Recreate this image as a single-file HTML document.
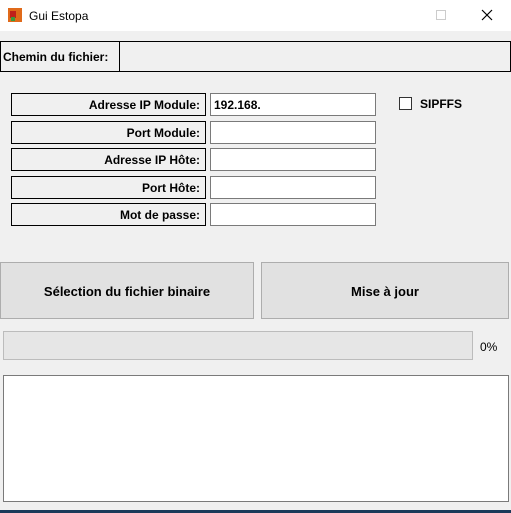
<!DOCTYPE html><html><head><style>
body{margin:0;width:511px;height:513px;background:#f0f0f0;position:relative;overflow:hidden;font-family:"Liberation Sans",sans-serif;font-size:12px;}
div{position:absolute;box-sizing:border-box;}
.lbl{left:11px;width:195px;height:23px;border:1px solid #000;text-align:right;font-weight:bold;padding-right:5px;line-height:23px;font-size:12px}
.in{left:210px;width:166px;height:23px;border:1px solid #7a7a7a;background:#fff;font-weight:bold;padding-left:3px;line-height:23px;font-size:12px}
.btn{top:262px;height:57px;background:#e1e1e1;border:1px solid #adadad;text-align:center;line-height:58px;font-weight:bold;font-size:13px}
</style></head><body>
<div style="left:0;top:0;width:511px;height:31px;background:#fff"></div>
<div style="left:8px;top:8px;width:14px;height:14px;background:#e06a1a"></div>
<div style="left:10px;top:11px;width:6px;height:7px;background:#c0201a"></div>
<div style="left:11px;top:17px;width:4px;height:4px;background:#3a9a3a"></div>
<div style="left:29px;top:9px;font-size:12px">Gui Estopa</div>
<div style="left:436px;top:10px;width:10px;height:10px;border:1px solid #ccc"></div>
<svg style="position:absolute;left:481px;top:9px" width="12" height="12"><path d="M1 1L11 11M11 1L1 11" stroke="#000" stroke-width="1.2"/></svg>
<div style="left:0;top:41px;width:511px;height:31px;border:1px solid #000"></div>
<div style="left:119px;top:41px;width:1px;height:31px;background:#000"></div>
<div style="left:3px;top:50px;font-weight:bold;font-size:12px;line-height:14px;top:50px">Chemin du fichier:</div>
<div class="lbl" style="top:93px">Adresse IP Module:</div>
<div class="lbl" style="top:121px">Port Module:</div>
<div class="lbl" style="top:148px">Adresse IP Hôte:</div>
<div class="lbl" style="top:176px">Port Hôte:</div>
<div class="lbl" style="top:203px">Mot de passe:</div>
<div class="in" style="top:93px">192.168.</div>
<div class="in" style="top:121px"></div>
<div class="in" style="top:148px"></div>
<div class="in" style="top:176px"></div>
<div class="in" style="top:203px"></div>
<div style="left:399px;top:97px;width:13px;height:13px;border:1px solid #333;background:#fff"></div>
<div style="left:420px;top:97px;font-weight:bold;font-size:12px">SIPFFS</div>
<div class="btn" style="left:0;width:254px">Sélection du fichier binaire</div>
<div class="btn" style="left:261px;width:248px">Mise à jour</div>
<div style="left:3px;top:331px;width:470px;height:29px;background:#e6e6e6;border:1px solid #bcbcbc"></div>
<div style="left:480px;top:340px;font-size:12px">0%</div>
<div style="left:3px;top:375px;width:506px;height:127px;background:#fff;border:1px solid #7a7a7a"></div>
<div style="left:0;top:510px;width:511px;height:3px;background:#1a3a5a"></div>
</body></html>
